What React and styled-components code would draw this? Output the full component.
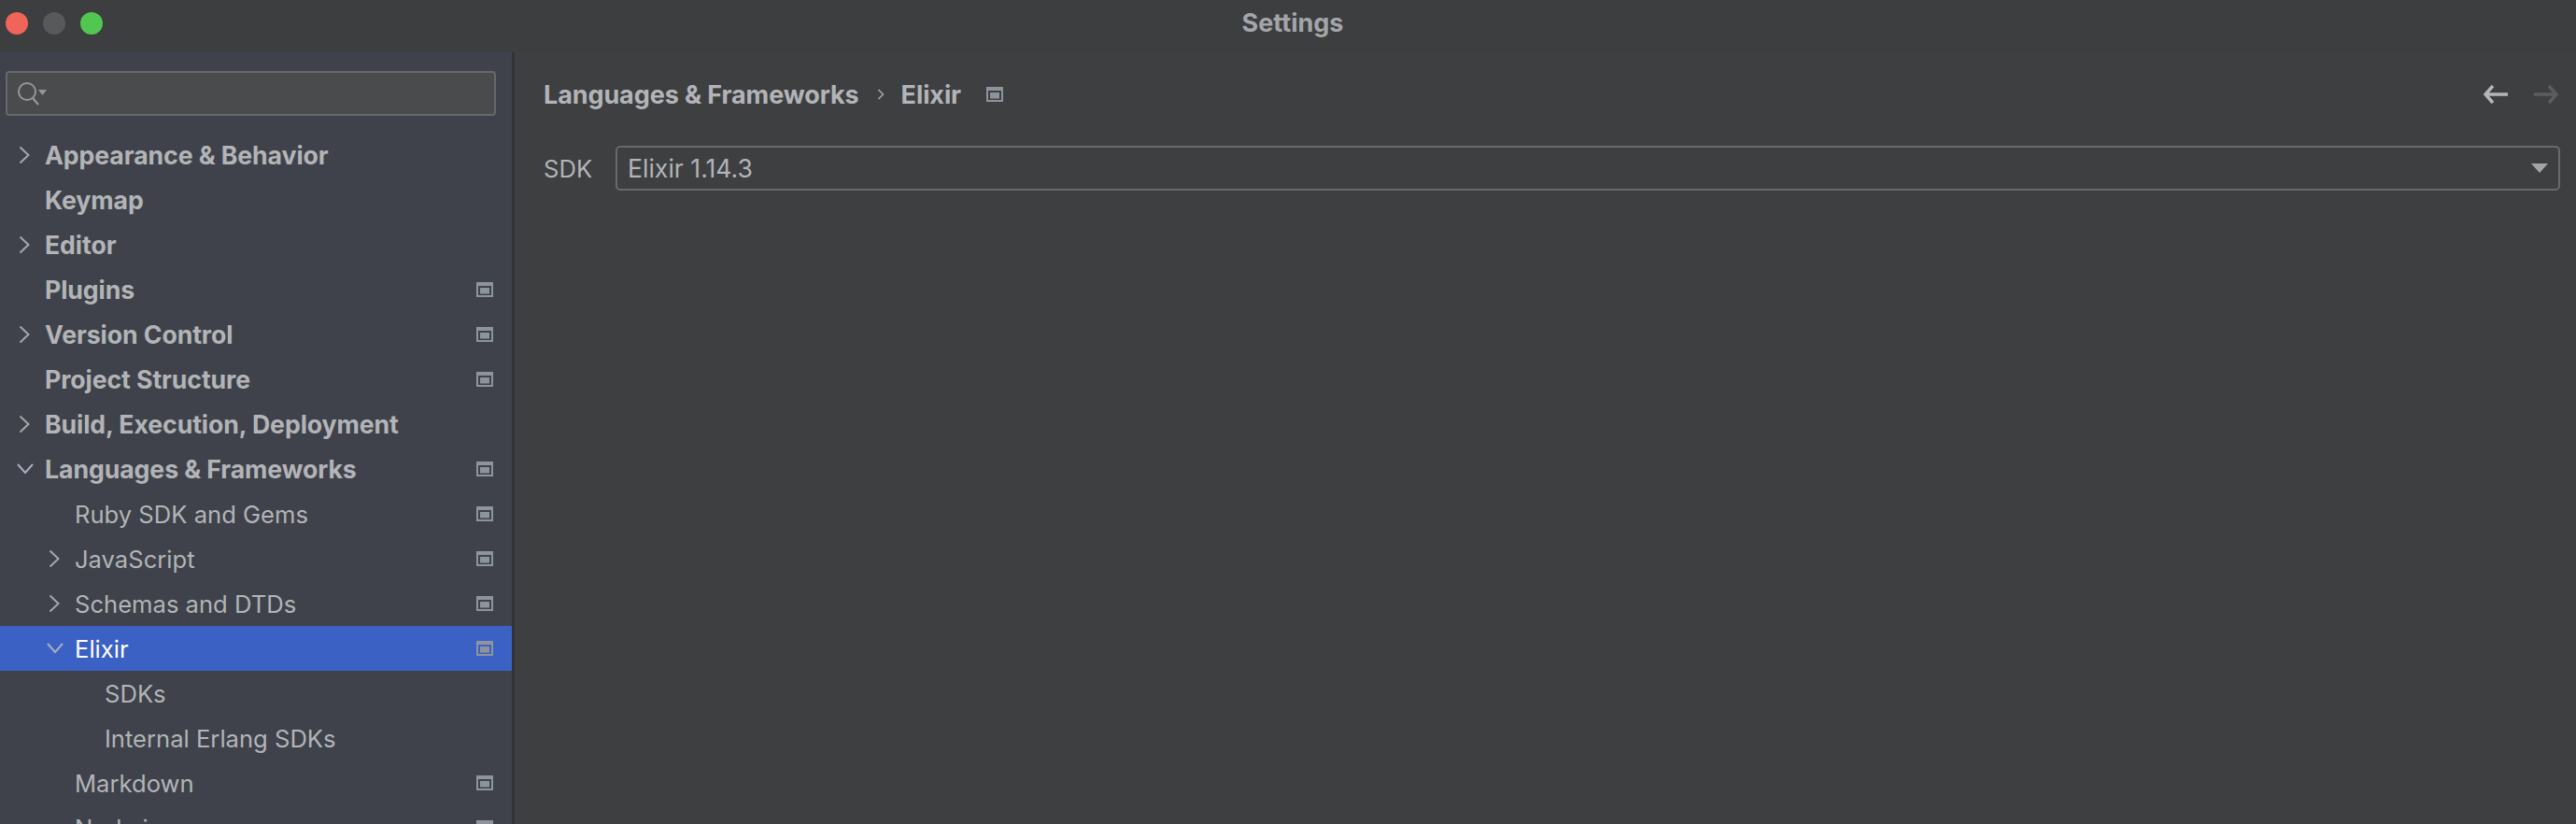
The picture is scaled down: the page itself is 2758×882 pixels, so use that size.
import React from "react";
import styled, { createGlobalStyle } from "styled-components";

const Global = createGlobalStyle`
  html, body { margin: 0; padding: 0; background: #3d3e40; }
  #root { width: 2758px; height: 882px; overflow: hidden; }
  * { box-sizing: border-box; }
`;
const Window = styled.div`
  width: 2758px; height: 882px; display: flex; flex-direction: column;
  background: #3e3f41; color: #b2b4b7; overflow: hidden;
  font-family: Inter, "Liberation Sans", sans-serif; font-size: 25.6px;
`;
const TitleBar = styled.header`
  height: 56px; flex: none; display: flex; align-items: center; position: relative;
  background: #3d3e40; padding: 0 6px 6px; gap: 16px;
`;
const Light = styled.span`
  width: 24px; height: 24px; border-radius: 50%; background: ${p => p.$c};
`;
const Title = styled.h1`
  position: absolute; left: 10px; right: 0; top: 9px; margin: 0; text-align: center;
  font-size: 27px; line-height: 32px; font-weight: 700; color: #a3a5a8;
`;
const Body = styled.div`flex: 1; display: flex; min-height: 0;`;
const Sidebar = styled.aside`
  width: 548px; flex: none; background: #3f424a; padding-top: 20px;
  overflow: hidden;
`;
const Divider = styled.div`width: 3px; flex: none; background: #323335;`;
const Search = styled.div`
  width: 525px; height: 48px; margin: 0 0 18px 6px; border: 2px solid #66686b;
  border-radius: 4px; background: #4a4b4d; display: flex; align-items: center; padding-left: 10px;
`;
const Row = styled.div`
  height: 48px; display: flex; align-items: center; position: relative;
  padding-left: ${p => 48 + p.$depth * 32}px; padding-right: 20px;
  background: ${p => (p.$selected ? "#3b61c4" : "transparent")};
  color: ${p => (p.$selected ? "#ffffff" : "#b2b4b7")};
  font-size: ${p => (p.$bold ? "26.7px" : "25.6px")};
  font-weight: ${p => (p.$bold ? 700 : 400)};
  letter-spacing: ${p => (p.$bold ? "-0.1px" : "0")};
  white-space: nowrap;
`;
const ChevronRight = styled.svg`
  position: absolute; left: ${p => 20 + p.$depth * 32}px; top: 12px;
`;
const ChevronDown = styled.svg`
  position: absolute; left: ${p => 17 + p.$depth * 32}px; top: 12px;
`;
const RowLabel = styled.span`flex: 1;`;
const Main = styled.main`flex: 1; padding: 0 17px 0 31px; min-width: 0;`;
const Crumbs = styled.div`
  height: 48px; margin-top: 21px; display: flex; align-items: center;
  font-size: 27px; font-weight: 700; letter-spacing: -0.1px;
`;
const Sep = styled.svg`margin: 0 18px 0 19px;`;
const Nav = styled.div`margin-left: auto; display: flex; gap: 26px; padding-right: 1px;`;
const Field = styled.div`
  display: flex; align-items: center; margin-top: 31px;
`;
const FieldLabel = styled.label`width: 77px; flex: none;`;
const Combo = styled.div`
  flex: 1; height: 48px; border: 2px solid #67696b; border-radius: 5px;
  display: flex; align-items: center; justify-content: space-between;
  padding: 0 11px 0 11px; font-size: 26.6px;
`;

const PageIcon = ({ ml }) => (
  <svg width="18" height="16" viewBox="0 0 18 16" style={ml ? { marginLeft: ml } : undefined}>
    <path fillRule="evenodd" d="M0 0 H18 V16 H0 Z M2 4 V14 H16 V4 Z M4 6 H14 V12.5 H4 Z" fill="#8d949b" />
  </svg>
);
const Right = ({ depth }) => (
  <ChevronRight $depth={depth} width="14" height="24" viewBox="0 0 14 24" fill="none">
    <path d="M1.5 3.5 L10.5 12 L1.5 20.5" stroke="#a5a7aa" strokeWidth="2" />
  </ChevronRight>
);
const Down = ({ depth }) => (
  <ChevronDown $depth={depth} width="20" height="24" viewBox="0 0 20 24" fill="none">
    <path d="M2 7 L10 16 L18 7" stroke="#a8aebd" strokeWidth="2" />
  </ChevronDown>
);

const rows = [
  ["Appearance & Behavior", 0, true, "r", false],
  ["Keymap", 0, true, "", false],
  ["Editor", 0, true, "r", false],
  ["Plugins", 0, true, "", true],
  ["Version Control", 0, true, "r", true],
  ["Project Structure", 0, true, "", true],
  ["Build, Execution, Deployment", 0, true, "r", false],
  ["Languages & Frameworks", 0, true, "d", true],
  ["Ruby SDK and Gems", 1, false, "", true],
  ["JavaScript", 1, false, "r", true],
  ["Schemas and DTDs", 1, false, "r", true],
  ["Elixir", 1, false, "d", true, true],
  ["SDKs", 2, false, "", false],
  ["Internal Erlang SDKs", 2, false, "", false],
  ["Markdown", 1, false, "", true],
  ["Node.js", 1, false, "", true],
];

export default function App() {
  return (
    <Window>
      <Global />
      <TitleBar>
        <Light $c="#f0645a" />
        <Light $c="#58595b" />
        <Light $c="#52c74f" />
        <Title>Settings</Title>
      </TitleBar>
      <Body>
        <Sidebar>
          <Search>
            <svg width="34" height="28" viewBox="0 0 34 28" fill="none">
              <circle cx="11" cy="12" r="9" stroke="#94969a" strokeWidth="2" />
              <path d="M17 19 L23 26" stroke="#94969a" strokeWidth="2.4" />
              <path d="M23 10 H32 L27.5 16 Z" fill="#94969a" />
            </svg>
          </Search>
          {rows.map(([label, depth, bold, chev, icon, selected]) => (
            <Row key={label} $depth={depth} $bold={bold} $selected={selected}>
              {chev === "r" && <Right depth={depth} />}
              {chev === "d" && <Down depth={depth} />}
              <RowLabel>{label}</RowLabel>
              {icon && <PageIcon />}
            </Row>
          ))}
        </Sidebar>
        <Divider />
        <Main>
          <Crumbs>
            <span>Languages &amp; Frameworks</span>
            <Sep width="8" height="14" viewBox="0 0 8 14" fill="none">
              <path d="M1.5 2 L6.5 7 L1.5 12" stroke="#a5a7aa" strokeWidth="1.6" />
            </Sep>
            <span>Elixir</span>
            <PageIcon ml={27} />
            <Nav>
              <svg width="28" height="22" viewBox="0 0 28 22" fill="none">
                <path d="M27 11 H3 M11 2 L3 11 L11 20" stroke="#b4b6b8" strokeWidth="3.4" />
              </svg>
              <svg width="28" height="22" viewBox="0 0 28 22" fill="none">
                <path d="M1 11 H25 M17 2 L25 11 L17 20" stroke="#5c5d5f" strokeWidth="3.4" />
              </svg>
            </Nav>
          </Crumbs>
          <Field>
            <FieldLabel>SDK</FieldLabel>
            <Combo>
              <span>Elixir 1.14.3</span>
              <svg width="18" height="10" viewBox="0 0 18 10"><path d="M0 0 H18 L9 10 Z" fill="#a3a5a7" /></svg>
            </Combo>
          </Field>
        </Main>
      </Body>
    </Window>
  );
}
